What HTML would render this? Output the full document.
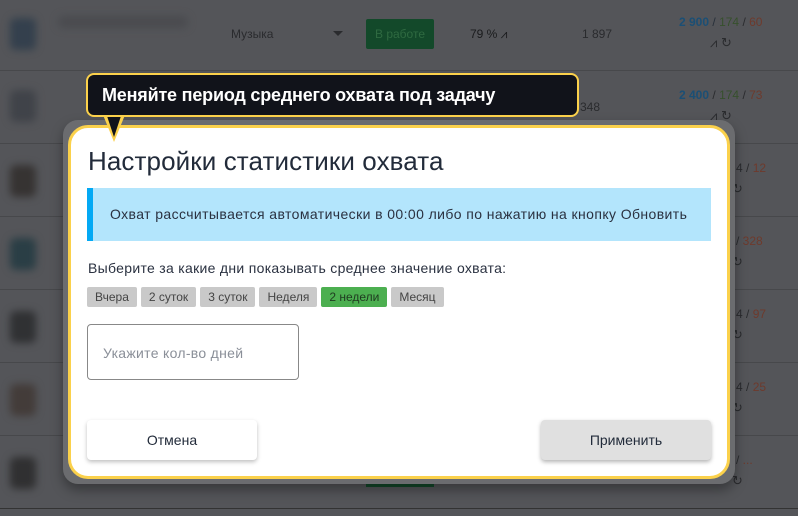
<!DOCTYPE html>
<html><head><meta charset="utf-8"><style>
*{box-sizing:border-box;margin:0;padding:0}
body{width:798px;height:516px;overflow:hidden;background:#545559;font-family:"Liberation Sans","DejaVu Sans",sans-serif;position:relative}
.abs{position:absolute}
.sep{position:absolute;left:0;width:798px;height:1px;background:#47484b}
.blur{position:absolute;border-radius:6px;filter:blur(4px)}
.t{position:absolute;font-size:12px;color:#2a2b2e}
.chip{display:inline-block;height:20px;line-height:20px;padding:0 8px;background:#c9c9c9;color:#444;font-size:12px;border-radius:2px;margin-right:4px}
</style></head><body>
<div class="sep" style="top:70px"></div>
<div class="sep" style="top:143px"></div>
<div class="sep" style="top:216px"></div>
<div class="sep" style="top:289px"></div>
<div class="sep" style="top:362px"></div>
<div class="sep" style="top:435px"></div>
<div class="sep" style="top:508px;background:#333"></div>
<div class="blur" style="left:10px;top:18px;width:26px;height:32px;background:#34404d"></div>
<div class="blur" style="left:58px;top:16px;width:130px;height:12px;background:#4a4b4f"></div>
<div class="blur" style="left:10px;top:90px;width:26px;height:32px;background:#404349"></div>
<div class="blur" style="left:10px;top:165px;width:26px;height:32px;background:#363332"></div>
<div class="blur" style="left:10px;top:238px;width:26px;height:32px;background:#2a3e45"></div>
<div class="blur" style="left:10px;top:311px;width:26px;height:32px;background:#303133"></div>
<div class="blur" style="left:10px;top:384px;width:26px;height:32px;background:#433c39"></div>
<div class="blur" style="left:10px;top:457px;width:26px;height:32px;background:#303031"></div>
<div class="t" style="left:231px;top:27px">Музыка</div>
<div class="abs" style="left:333px;top:31px;border:5px solid transparent;border-top-color:#2a2b2e"></div>
<div class="abs" style="left:366px;top:19px;width:68px;height:30px;background:#13492a;border-radius:2px;color:#2f6a41;font-size:12px;line-height:30px;text-align:center">В работе</div>
<div class="t" style="left:470px;top:27px;color:#1a1b1d">79 % ⩘</div>
<div class="t" style="left:582px;top:27px">1 897</div>
<div class="t" style="left:679px;top:15px;font-weight:bold"><span style="color:#1b4f75">2 900</span> <span style="font-weight:normal;color:#27303a">/</span> <span style="font-weight:normal;color:#36502c">174</span> <span style="font-weight:normal">/</span> <span style="font-weight:normal;color:#6e3a2c">60</span></div>
<div class="t" style="left:710px;top:35px;font-size:13px">⩘ ↻</div>
<div class="t" style="left:570px;top:100px">2 348</div>
<div class="t" style="left:679px;top:88px;font-weight:bold"><span style="color:#1b4f75">2 400</span> <span style="font-weight:normal">/</span> <span style="font-weight:normal;color:#36502c">174</span> <span style="font-weight:normal">/</span> <span style="font-weight:normal;color:#6e3a2c">73</span></div>
<div class="t" style="left:710px;top:108px;font-size:13px">⩘ ↻</div>
<div class="t" style="left:736px;top:161px">4 / <span style="color:#6e3a2c">12</span></div>
<div class="t" style="left:736px;top:234px">/ <span style="color:#6e3a2c">328</span></div>
<div class="t" style="left:736px;top:307px">4 / <span style="color:#6e3a2c">97</span></div>
<div class="t" style="left:736px;top:380px">4 / <span style="color:#6e3a2c">25</span></div>
<div class="t" style="left:736px;top:453px">/ <span style="color:#6e3a2c">...</span></div>
<div class="t" style="left:732px;top:181px;font-size:13px">↻</div>
<div class="t" style="left:732px;top:254px;font-size:13px">↻</div>
<div class="t" style="left:732px;top:327px;font-size:13px">↻</div>
<div class="t" style="left:732px;top:400px;font-size:13px">↻</div>
<div class="t" style="left:732px;top:473px;font-size:13px">↻</div>
<div class="abs" style="left:366px;top:475px;width:68px;height:12px;background:#13492a"></div>

<div class="abs" style="left:63px;top:120px;width:672px;height:364px;background:#6b6c6f;border-radius:15px;box-shadow:0 6px 12px rgba(0,0,0,.35)"></div>
<div class="abs" style="left:68px;top:125px;width:662px;height:354px;background:#fff;border:3px solid #fbd14b;border-radius:20px"></div>
<div class="abs" style="left:88px;top:146px;font-size:26px;color:#222b3a;letter-spacing:0.1px">Настройки статистики охвата</div>
<div class="abs" style="left:87px;top:188px;width:624px;height:53px;background:#b3e5fc;border-left:6px solid #03a9f4;font-size:14px;color:#2a3140;line-height:53px;padding-left:17px;letter-spacing:0.4px;white-space:nowrap">Охват рассчитывается автоматически в 00:00 либо по нажатию на кнопку Обновить</div>
<div class="abs" style="left:88px;top:260px;font-size:14px;color:#2a3140;letter-spacing:0.3px">Выберите за какие дни показывать среднее значение охвата:</div>
<div class="abs" style="left:87px;top:287px;white-space:nowrap"><span class="chip">Вчера</span><span class="chip">2 суток</span><span class="chip">3 суток</span><span class="chip">Неделя</span><span class="chip" style="background:#4caf50;color:#1f3a20">2 недели</span><span class="chip">Месяц</span></div>
<div class="abs" style="left:87px;top:324px;width:212px;height:56px;border:1px solid #888;border-radius:4px;font-size:14px;color:#8a8f98;line-height:56px;padding-left:15px;letter-spacing:0.3px">Укажите кол-во дней</div>
<div class="abs" style="left:87px;top:420px;width:170px;height:40px;background:#fff;border-radius:4px;box-shadow:0 2px 4px rgba(0,0,0,.25);font-size:14px;color:#222b3a;text-align:center;line-height:40px">Отмена</div>
<div class="abs" style="left:541px;top:420px;width:170px;height:40px;background:#e0e0e0;border-radius:4px;box-shadow:0 2px 4px rgba(0,0,0,.3);font-size:14px;color:#222b3a;text-align:center;line-height:40px">Применить</div>

<svg class="abs" style="left:98px;top:110px" width="32" height="34"><polygon points="3,0 29,0 16,32" fill="#fbd14b"/><polygon points="7,0 25,0 16,27" fill="#11131a"/></svg>
<div class="abs" style="left:86px;top:73px;width:493px;height:44px;background:#11131a;border:2px solid #fbd14b;border-radius:8px;color:#fff;font-weight:bold;font-size:18px;line-height:40px;padding-left:14px;letter-spacing:-0.2px;white-space:nowrap">Меняйте период среднего охвата под задачу</div>
</body></html>
